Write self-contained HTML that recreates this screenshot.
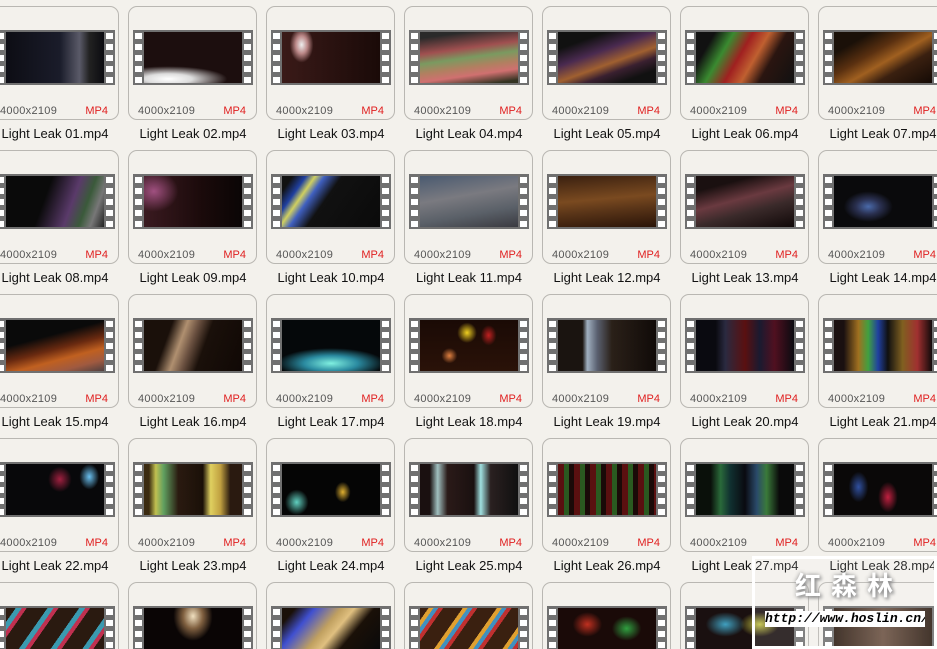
<!DOCTYPE html><html><head><meta charset="utf-8"><style>
html,body{margin:0;padding:0;overflow:hidden;width:937px;height:649px}
#w{position:relative;width:937px;height:649px;overflow:hidden;background:#f3f1ec;font-family:"Liberation Sans","DejaVu Sans",sans-serif}
.c{position:absolute;width:129px;height:114px;border:1px solid #b9b7b2;border-radius:9px;box-sizing:border-box}
.r5{height:67px;border-bottom:none;border-radius:9px 9px 0 0}
.s{position:absolute;left:4px;top:23px;width:120px;height:55px;background:#707070}
.r5 .s{height:43px}
.s:before,.s:after{content:"";position:absolute;top:3px;width:7px;height:50px;background:repeating-linear-gradient(180deg,#fff 0 6px,transparent 6px 11px)}
.r5 .s:before,.r5 .s:after{height:40px}
.s:before{left:2px}.s:after{right:2px}
.i{position:absolute;left:11px;top:2px;width:98px;height:51px}
.r5 .i{height:41px}
.m{position:absolute;top:98px;left:9px;font-size:11px;color:#555;letter-spacing:.3px}
.p{position:absolute;top:98px;right:10px;font-size:11px;color:#e02020}
.l{position:absolute;width:138px;text-align:center;font-size:13px;color:#111}
</style></head><body><div id="w">
<!-- row 1 -->
<div class="c" style="left:-10px;top:6px"><div class="s"><div class="i" style="background:linear-gradient(90deg,#0d0d14,#1a1c2a 55%,#5a5a68 75%,#222 85%,#0b0b10)"></div></div><span class="m">4000x2109</span><span class="p">MP4</span></div>
<div class="c" style="left:128px;top:6px"><div class="s"><div class="i" style="background:radial-gradient(ellipse 60% 25% at 25% 92%,#fff 0,#ddd 40%,transparent 100%),#1c0e0e"></div></div><span class="m">4000x2109</span><span class="p">MP4</span></div>
<div class="c" style="left:266px;top:6px"><div class="s"><div class="i" style="background:radial-gradient(ellipse 12% 35% at 20% 25%,#eee 0,#b88 50%,transparent),linear-gradient(90deg,#3a1a18,#2a1210 50%,#1a0a08)"></div></div><span class="m">4000x2109</span><span class="p">MP4</span></div>
<div class="c" style="left:404px;top:6px"><div class="s"><div class="i" style="background:linear-gradient(172deg,#2a2a2a 10%,#a05050 35%,#7a9a60 50%,#b08060 65%,#d07070 78%,#332 95%)"></div></div><span class="m">4000x2109</span><span class="p">MP4</span></div>
<div class="c" style="left:542px;top:6px"><div class="s"><div class="i" style="background:linear-gradient(160deg,#111 20%,#4a2a50 40%,#a06030 58%,#3a2030 70%,#111 85%)"></div></div><span class="m">4000x2109</span><span class="p">MP4</span></div>
<div class="c" style="left:680px;top:6px"><div class="s"><div class="i" style="background:linear-gradient(120deg,#111 15%,#3a8a30 30%,#a02020 45%,#c06030 58%,#2a1510 72%,#111)"></div></div><span class="m">4000x2109</span><span class="p">MP4</span></div>
<div class="c" style="left:818px;top:6px"><div class="s"><div class="i" style="background:linear-gradient(150deg,#1a1008 20%,#5a3010 40%,#a06020 55%,#3a2010 70%,#140a05)"></div></div><span class="m">4000x2109</span><span class="p">MP4</span></div>
<div class="l" style="left:-14px;top:126px">Light Leak 01.mp4</div><div class="l" style="left:124px;top:126px">Light Leak 02.mp4</div><div class="l" style="left:262px;top:126px">Light Leak 03.mp4</div><div class="l" style="left:400px;top:126px">Light Leak 04.mp4</div><div class="l" style="left:538px;top:126px">Light Leak 05.mp4</div><div class="l" style="left:676px;top:126px">Light Leak 06.mp4</div><div class="l" style="left:814px;top:126px">Light Leak 07.mp4</div>
<!-- row 2 -->
<div class="c" style="left:-10px;top:150px"><div class="s"><div class="i" style="background:linear-gradient(110deg,#0a0a0a 40%,#5a3a6a 65%,#3a5a3a 78%,#777 88%,#222)"></div></div><span class="m">4000x2109</span><span class="p">MP4</span></div>
<div class="c" style="left:128px;top:150px"><div class="s"><div class="i" style="background:radial-gradient(ellipse 25% 40% at 10% 30%,#a05080,transparent),linear-gradient(90deg,#3a1a20,#1a0a0a 60%,#0a0505)"></div></div><span class="m">4000x2109</span><span class="p">MP4</span></div>
<div class="c" style="left:266px;top:150px"><div class="s"><div class="i" style="background:linear-gradient(125deg,#111 8%,#2040a0 18%,#d0d060 25%,#4060c0 32%,#111 45%,#0a0a0a)"></div></div><span class="m">4000x2109</span><span class="p">MP4</span></div>
<div class="c" style="left:404px;top:150px"><div class="s"><div class="i" style="background:linear-gradient(170deg,#4a5a70,#7a7a80 40%,#5a6068 70%,#3a3a40)"></div></div><span class="m">4000x2109</span><span class="p">MP4</span></div>
<div class="c" style="left:542px;top:150px"><div class="s"><div class="i" style="background:linear-gradient(175deg,#3a2010,#7a4a20 45%,#5a3518 65%,#2a1408)"></div></div><span class="m">4000x2109</span><span class="p">MP4</span></div>
<div class="c" style="left:680px;top:150px"><div class="s"><div class="i" style="background:linear-gradient(165deg,#1a1010 20%,#6a3a40 45%,#3a2a2a 65%,#100808)"></div></div><span class="m">4000x2109</span><span class="p">MP4</span></div>
<div class="c" style="left:818px;top:150px"><div class="s"><div class="i" style="background:radial-gradient(ellipse 25% 30% at 35% 60%,#4a6aaa,#2a3050 50%,transparent),#0a0a0c"></div></div><span class="m">4000x2109</span><span class="p">MP4</span></div>
<div class="l" style="left:-14px;top:270px">Light Leak 08.mp4</div><div class="l" style="left:124px;top:270px">Light Leak 09.mp4</div><div class="l" style="left:262px;top:270px">Light Leak 10.mp4</div><div class="l" style="left:400px;top:270px">Light Leak 11.mp4</div><div class="l" style="left:538px;top:270px">Light Leak 12.mp4</div><div class="l" style="left:676px;top:270px">Light Leak 13.mp4</div><div class="l" style="left:814px;top:270px">Light Leak 14.mp4</div>
<!-- row 3 -->
<div class="c" style="left:-10px;top:294px"><div class="s"><div class="i" style="background:linear-gradient(165deg,#0a0a0a 35%,#6a2a10 55%,#c06020 70%,#a05a40 85%,#504040)"></div></div><span class="m">4000x2109</span><span class="p">MP4</span></div>
<div class="c" style="left:128px;top:294px"><div class="s"><div class="i" style="background:linear-gradient(110deg,#1a100a 25%,#b09070 38%,#6a5040 48%,#1a100a 60%,#100805)"></div></div><span class="m">4000x2109</span><span class="p">MP4</span></div>
<div class="c" style="left:266px;top:294px"><div class="s"><div class="i" style="background:radial-gradient(ellipse 55% 30% at 50% 85%,#80f0e0,#2a8aa0 50%,transparent),#05080a"></div></div><span class="m">4000x2109</span><span class="p">MP4</span></div>
<div class="c" style="left:404px;top:294px"><div class="s"><div class="i" style="background:radial-gradient(ellipse 10% 20% at 48% 25%,#f0d020,transparent),radial-gradient(ellipse 8% 15% at 30% 70%,#e08040,transparent),radial-gradient(ellipse 8% 20% at 70% 30%,#c02020,transparent),linear-gradient(180deg,#1a0a05,#2a1208)"></div></div><span class="m">4000x2109</span><span class="p">MP4</span></div>
<div class="c" style="left:542px;top:294px"><div class="s"><div class="i" style="background:linear-gradient(90deg,#1a1410 25%,#a0b0c0 30%,#5a6070 40%,#2a2018 55%,#100a08)"></div></div><span class="m">4000x2109</span><span class="p">MP4</span></div>
<div class="c" style="left:680px;top:294px"><div class="s"><div class="i" style="background:linear-gradient(90deg,#0a0a10 20%,#2a2a40 30%,#5a1010 50%,#1a1a30 65%,#501020 80%,#0a0a10)"></div></div><span class="m">4000x2109</span><span class="p">MP4</span></div>
<div class="c" style="left:818px;top:294px"><div class="s"><div class="i" style="background:linear-gradient(90deg,#1a1010 10%,#a07020 25%,#40a040 35%,#2040a0 45%,#101010 55%,#806020 70%,#a03030 85%,#100a0a)"></div></div><span class="m">4000x2109</span><span class="p">MP4</span></div>
<div class="l" style="left:-14px;top:414px">Light Leak 15.mp4</div><div class="l" style="left:124px;top:414px">Light Leak 16.mp4</div><div class="l" style="left:262px;top:414px">Light Leak 17.mp4</div><div class="l" style="left:400px;top:414px">Light Leak 18.mp4</div><div class="l" style="left:538px;top:414px">Light Leak 19.mp4</div><div class="l" style="left:676px;top:414px">Light Leak 20.mp4</div><div class="l" style="left:814px;top:414px">Light Leak 21.mp4</div>
<!-- row 4 -->
<div class="c" style="left:-10px;top:438px"><div class="s"><div class="i" style="background:radial-gradient(ellipse 10% 25% at 85% 25%,#6ac0f0,transparent),radial-gradient(ellipse 12% 25% at 55% 30%,#a02040,transparent),#08080a"></div></div><span class="m">4000x2109</span><span class="p">MP4</span></div>
<div class="c" style="left:128px;top:438px"><div class="s"><div class="i" style="background:linear-gradient(90deg,#3a2a10 5%,#c0c050 12%,#60a060 20%,#2a1a10 35%,#1a1008 60%,#e0d060 68%,#c0a040 78%,#2a1a10 88%)"></div></div><span class="m">4000x2109</span><span class="p">MP4</span></div>
<div class="c" style="left:266px;top:438px"><div class="s"><div class="i" style="background:radial-gradient(ellipse 12% 25% at 15% 75%,#60d0c0,transparent),radial-gradient(ellipse 8% 20% at 62% 55%,#e0b030,transparent),#050505"></div></div><span class="m">4000x2109</span><span class="p">MP4</span></div>
<div class="c" style="left:404px;top:438px"><div class="s"><div class="i" style="background:linear-gradient(90deg,#1a1010 10%,#a0c0c0 18%,#2a1a18 28%,#1a1010 55%,#a0e0e0 62%,#2a2020 72%,#101010)"></div></div><span class="m">4000x2109</span><span class="p">MP4</span></div>
<div class="c" style="left:542px;top:438px"><div class="s"><div class="i" style="background:repeating-linear-gradient(90deg,#5a1010 0 6px,#2a5a20 6px 11px,#1a0a08 11px 16px)"></div></div><span class="m">4000x2109</span><span class="p">MP4</span></div>
<div class="c" style="left:680px;top:438px"><div class="s"><div class="i" style="background:linear-gradient(90deg,#0a100a 15%,#2a6a3a 25%,#103030 35%,#0a0a10 50%,#2a4a6a 62%,#3a7a3a 72%,#0a0a0a 85%)"></div></div><span class="m">4000x2109</span><span class="p">MP4</span></div>
<div class="c" style="left:818px;top:438px"><div class="s"><div class="i" style="background:radial-gradient(ellipse 10% 30% at 55% 65%,#c02040,transparent),radial-gradient(ellipse 10% 30% at 25% 45%,#3050a0,transparent),#0a0808"></div></div><span class="m">4000x2109</span><span class="p">MP4</span></div>
<div class="l" style="left:-14px;top:558px">Light Leak 22.mp4</div><div class="l" style="left:124px;top:558px">Light Leak 23.mp4</div><div class="l" style="left:262px;top:558px">Light Leak 24.mp4</div><div class="l" style="left:400px;top:558px">Light Leak 25.mp4</div><div class="l" style="left:538px;top:558px">Light Leak 26.mp4</div><div class="l" style="left:676px;top:558px">Light Leak 27.mp4</div><div class="l" style="left:814px;top:558px">Light Leak 28.mp4</div>
<!-- row 5 -->
<div class="c r5" style="left:-10px;top:582px"><div class="s"><div class="i" style="background:repeating-linear-gradient(125deg,#2a1a10 0 8px,#3a9ab0 8px 13px,#c03050 13px 17px,#2a1a10 17px 26px)"></div></div></div>
<div class="c r5" style="left:128px;top:582px"><div class="s"><div class="i" style="background:radial-gradient(ellipse 20% 60% at 50% 20%,#f0e0c0,#806040 50%,transparent),#0a0505"></div></div></div>
<div class="c r5" style="left:266px;top:582px"><div class="s"><div class="i" style="background:linear-gradient(130deg,#1a1008 10%,#4050d0 25%,#c0a060 45%,#e0c080 55%,#1a1008 70%,#0a0a0a)"></div></div></div>
<div class="c r5" style="left:404px;top:582px"><div class="s"><div class="i" style="background:repeating-linear-gradient(125deg,#3a2010 0 7px,#e0a030 7px 11px,#4090c0 11px 15px,#c03030 15px 19px,#3a2010 19px 28px)"></div></div></div>
<div class="c r5" style="left:542px;top:582px"><div class="s"><div class="i" style="background:radial-gradient(ellipse 15% 30% at 30% 40%,#c03020,transparent),radial-gradient(ellipse 15% 30% at 70% 50%,#30a040,transparent),#1a0a08"></div></div></div>
<div class="c r5" style="left:680px;top:582px"><div class="s"><div class="i" style="background:radial-gradient(ellipse 20% 30% at 30% 40%,#40a0c0,transparent),radial-gradient(ellipse 20% 30% at 65% 40%,#c0c040,transparent),#1a1010"></div></div></div>
<div class="c r5" style="left:818px;top:582px"><div class="s"><div class="i" style="background:linear-gradient(90deg,#2a1a10,#6a5040 50%,#2a1a10)"></div></div></div>
<!-- watermark -->
<div style="position:absolute;left:752px;top:556px;width:179px;height:87px;border:3px solid #fff;background:rgba(255,255,255,.12)"></div>
<div style="position:absolute;left:795px;top:568px;font-family:'Noto Sans CJK SC',sans-serif;font-size:26px;line-height:34px;font-weight:bold;color:#fff;letter-spacing:10px;text-shadow:0 0 4px #888,2px 2px 3px #999">红森林</div>
<div style="position:absolute;left:765px;top:611px;width:160px;height:16px;background:#fff;font-family:'Liberation Mono',monospace;font-style:italic;font-weight:bold;font-size:13px;line-height:16px;color:#000;text-align:center;overflow:hidden">http://www.hoslin.cn/</div>
</div></body></html>
